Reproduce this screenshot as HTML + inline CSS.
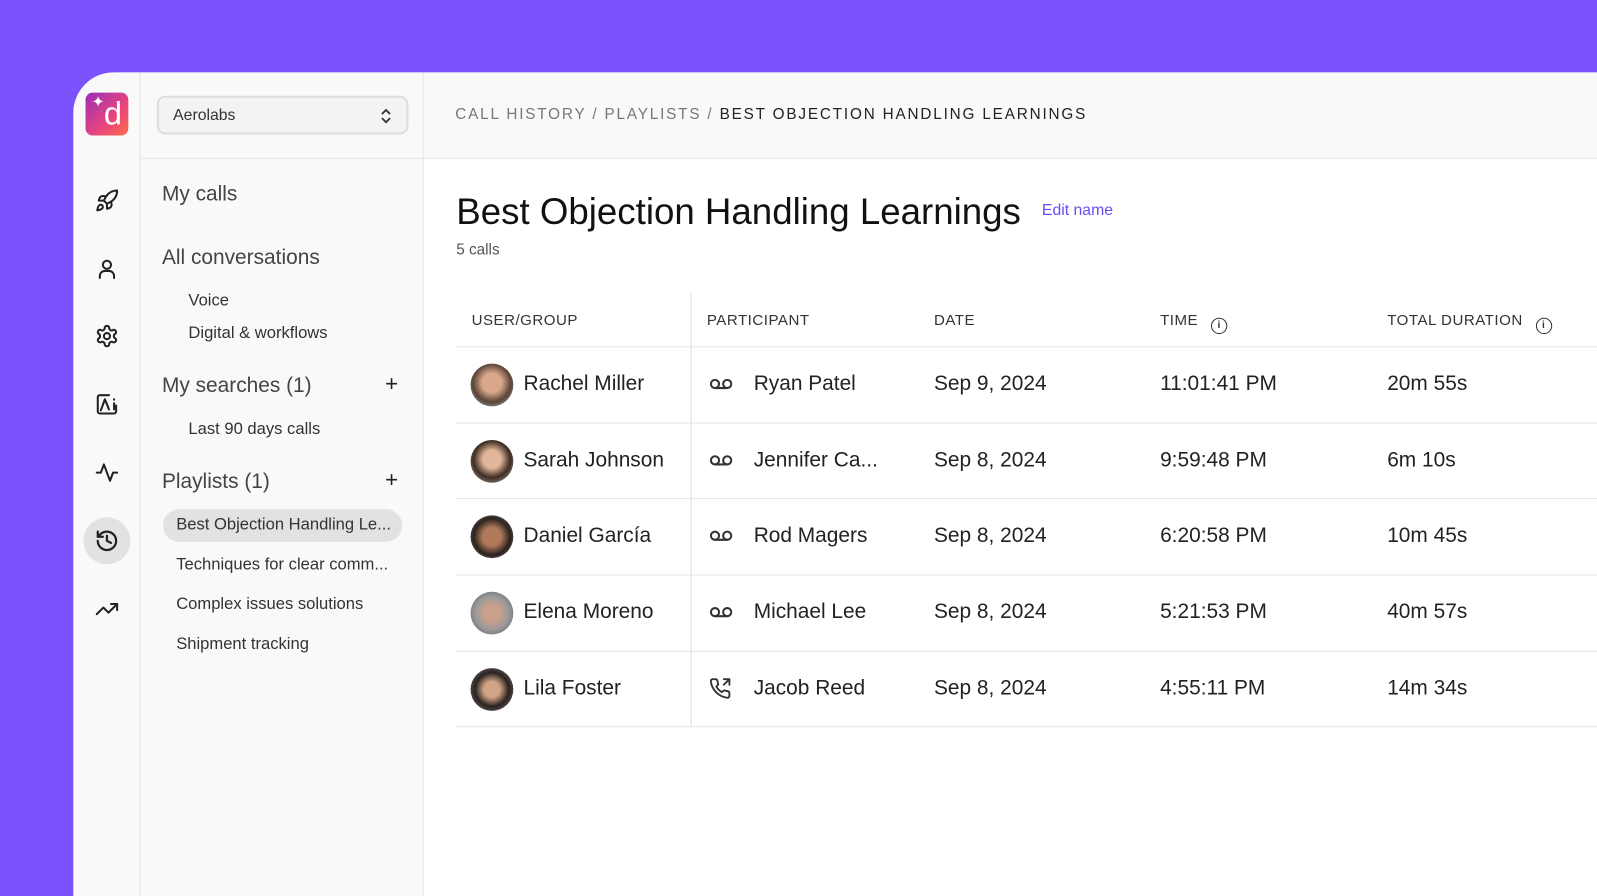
<!DOCTYPE html>
<html><head><meta charset="utf-8"><style>
*{box-sizing:border-box;margin:0;padding:0}
body{width:1597px;height:896px;background:#7b52fb;font-family:"Liberation Sans",sans-serif;color:#222;position:relative;overflow:hidden}
.wrap{position:absolute;left:0;top:0;width:1568px;height:880px;transform:scale(1.0185);transform-origin:0 0}
.app{position:absolute;left:72px;top:71px;right:0;bottom:0;background:#fff;border-top-left-radius:40px;overflow:hidden}
.rail{position:absolute;left:0;top:0;width:66px;bottom:0;background:#f9f9f9;border-right:1px solid #e4e4e4}
.side{position:absolute;left:66px;top:0;width:278px;bottom:0;background:#f9f9f9;border-right:1px solid #e4e4e4}
.head{position:absolute;left:344px;right:0;top:0;height:85px;background:#f9f9f9;border-bottom:1px solid #e4e4e4}
.abs{position:absolute;white-space:nowrap}
.ic{position:absolute;left:21px;width:24px;height:24px}
.sel{position:absolute;left:16px;top:23px;width:247px;height:38px;border:2px solid #ddd;border-radius:8px;background:#f3f3f3;font-size:15.5px;padding:9px 14px;color:#333}
.sidesep{position:absolute;left:0;right:0;top:84px;border-top:1px solid #e4e4e4}
.h1{font-size:20.5px;color:#444}
.s2{font-size:16.3px;color:#333}
.table{position:absolute;left:375px;top:217px;width:1200px}
.th{position:absolute;top:19px;font-size:14.8px;letter-spacing:.5px;color:#333}
.row{position:absolute;left:0;right:0;height:75px;border-top:1px solid #e6e6e6;font-size:20.5px;color:#222}
.row span{position:absolute;top:24px;white-space:nowrap}
.av{position:absolute;left:15px;top:16px;width:42px;height:42px;border-radius:50%}
</style></head><body>
<div class="wrap">
<div class="app">
 <div class="rail">
  <div style="position:absolute;left:12px;top:20px;width:42px;height:42px;border-radius:7px;background:linear-gradient(135deg,#9b2fb8,#e8457c 60%,#ff6a4a)"><span style="position:absolute;left:6px;top:0;color:#fff;font-size:15px">✦</span><span style="position:absolute;left:18px;top:4px;color:#fff;font-size:32px;line-height:32px">d</span></div>
  <svg class="ic" style="top:114px" viewBox="0 0 24 24" fill="none" stroke="#222" stroke-width="2" stroke-linecap="round" stroke-linejoin="round"><path d="M4.5 16.5c-1.5 1.3-2 5-2 5s3.7-.5 5-2c.7-.8.7-2.1-.1-2.9a2.2 2.2 0 0 0-2.9-.1z"/><path d="M12 15l-3-3a22 22 0 0 1 2-3.9A12.9 12.9 0 0 1 22 2c0 2.7-.8 7.5-6 11a22 22 0 0 1-4 2z"/><path d="M9 12H4s.6-3 2-4c1.6-1.1 5 0 5 0M12 15v5s3-.6 4-2c1.1-1.6 0-5 0-5"/></svg>
  <svg class="ic" style="top:181px" viewBox="0 0 24 24" fill="none" stroke="#222" stroke-width="2" stroke-linecap="round"><circle cx="12" cy="8" r="4"/><path d="M5 21v-2a5 5 0 0 1 5-5h4a5 5 0 0 1 5 5v2"/></svg>
  <svg class="ic" style="top:247px" viewBox="0 0 24 24" fill="none" stroke="#222" stroke-width="2" stroke-linejoin="round"><path d="M12.2 2h-.4a2 2 0 0 0-2 2v.2a2 2 0 0 1-1 1.7l-.4.3a2 2 0 0 1-2 0l-.2-.1a2 2 0 0 0-2.7.7l-.2.4a2 2 0 0 0 .7 2.7l.2.1a2 2 0 0 1 1 1.7v.5a2 2 0 0 1-1 1.8l-.2.1a2 2 0 0 0-.7 2.7l.2.4a2 2 0 0 0 2.7.7l.2-.1a2 2 0 0 1 2 0l.4.3a2 2 0 0 1 1 1.7v.2a2 2 0 0 0 2 2h.4a2 2 0 0 0 2-2v-.2a2 2 0 0 1 1-1.7l.4-.3a2 2 0 0 1 2 0l.2.1a2 2 0 0 0 2.7-.7l.2-.4a2 2 0 0 0-.7-2.7l-.2-.1a2 2 0 0 1-1-1.8v-.5a2 2 0 0 1 1-1.7l.2-.1a2 2 0 0 0 .7-2.7l-.2-.4a2 2 0 0 0-2.7-.7l-.2.1a2 2 0 0 1-2 0l-.4-.3a2 2 0 0 1-1-1.7V4a2 2 0 0 0-2-2z"/><circle cx="12" cy="12" r="3"/></svg>
  <svg class="ic" style="top:314px" viewBox="0 0 24 24" fill="none" stroke="#222" stroke-width="2" stroke-linecap="round" stroke-linejoin="round"><path d="M14 3H5a2 2 0 0 0-2 2v14a2 2 0 0 0 2 2h14a2 2 0 0 0 2-2v-6"/><path d="M6 18l4-11 4 10"/><path d="M19 11v6M19 7v.5"/></svg>
  <svg class="ic" style="top:381px" viewBox="0 0 24 24" fill="none" stroke="#222" stroke-width="2" stroke-linecap="round" stroke-linejoin="round"><path d="M2 12h4l3-8 6 16 3-8h4"/></svg>
  <div style="position:absolute;left:10px;top:437px;width:46px;height:46px;border-radius:50%;background:#e2e2e2"></div>
  <svg class="ic" style="top:448px" viewBox="0 0 24 24" fill="none" stroke="#222" stroke-width="2.2" stroke-linecap="round" stroke-linejoin="round"><path d="M3 12a9 9 0 1 0 9-9 9.7 9.7 0 0 0-6.7 2.7L3 8"/><path d="M3 3v5h5"/><path d="M12 7v5l4 2"/></svg>
  <svg class="ic" style="top:515px" viewBox="0 0 24 24" fill="none" stroke="#222" stroke-width="2" stroke-linecap="round" stroke-linejoin="round"><path d="M22 7l-8.5 8.5-5-5L2 17"/><path d="M16 7h6v6"/></svg>
 </div>
 <div class="side">
  <div class="sel">Aerolabs<svg style="position:absolute;right:14px;top:10px" width="12" height="16" viewBox="0 0 12 16" fill="none" stroke="#333" stroke-width="1.8"><path d="M2 6l4-4 4 4M2 10l4 4 4-4"/></svg></div>
  <div class="sidesep"></div>
  <div class="abs h1" style="left:21px;top:108px">My calls</div>
  <div class="abs h1" style="left:21px;top:170px">All conversations</div>
  <div class="abs s2" style="left:47px;top:215px">Voice</div>
  <div class="abs s2" style="left:47px;top:247px">Digital &amp; workflows</div>
  <div class="abs h1" style="left:21px;top:296px">My searches (1)</div>
  <div class="abs" style="left:240px;top:293px;font-size:22px">+</div>
  <div class="abs s2" style="left:47px;top:341px">Last 90 days calls</div>
  <div class="abs h1" style="left:21px;top:390px">Playlists (1)</div>
  <div class="abs" style="left:240px;top:387px;font-size:22px">+</div>
  <div class="abs" style="left:22px;top:429px;width:235px;height:32px;border-radius:16px;background:#e2e2e2"></div>
  <div class="abs s2" style="left:35px;top:435px">Best Objection Handling Le...</div>
  <div class="abs s2" style="left:35px;top:474px">Techniques for clear comm...</div>
  <div class="abs s2" style="left:35px;top:513px">Complex issues solutions</div>
  <div class="abs s2" style="left:35px;top:552px">Shipment tracking</div>
 </div>
 <div class="head"><div class="abs" style="left:31px;top:33px;font-size:15px;letter-spacing:1.8px;color:#777">CALL HISTORY / PLAYLISTS / <span style="color:#222">BEST OBJECTION HANDLING LEARNINGS</span></div></div>
 <div class="abs" style="left:376px;top:116px;font-size:36px;color:#111">Best Objection Handling Learnings</div>
 <div class="abs" style="left:951px;top:127px;font-size:15.5px;color:#6a4cf0">Edit name</div>
 <div class="abs" style="left:376px;top:166px;font-size:15px;color:#555">5 calls</div>
 <div class="table" style="height:426px">
  <div style="position:absolute;left:231px;top:0;height:426px;border-left:1px solid #ddd"></div>
  <div class="th" style="left:16px">USER/GROUP</div>
  <div class="th" style="left:247px">PARTICIPANT</div>
  <div class="th" style="left:470px">DATE</div>
  <div class="th" style="left:692px">TIME <span style="display:inline-block;width:16px;height:16px;border:1.8px solid #333;border-radius:50%;font-size:10px;text-align:center;line-height:13px;margin-left:8px;vertical-align:-3px;font-weight:bold">i</span></div>
  <div class="th" style="left:915px">TOTAL DURATION <span style="display:inline-block;width:16px;height:16px;border:1.8px solid #333;border-radius:50%;font-size:10px;text-align:center;line-height:13px;margin-left:8px;vertical-align:-3px;font-weight:bold">i</span></div>
  <div class="row" style="top:52px"><div class="av" style="background:radial-gradient(circle at 50% 45%,#d9a88a 30%,#5a4438 60%,#a9c3d8)"></div><span style="left:67px">Rachel Miller</span><svg style="position:absolute;left:250px;top:30px" width="22" height="12" viewBox="0 0 22 12" fill="none" stroke="#333" stroke-width="2"><circle cx="5" cy="6" r="4"/><circle cx="17" cy="6" r="4"/><path d="M5 10h12"/></svg><span style="left:293px">Ryan Patel</span><span style="left:470px">Sep 9, 2024</span><span style="left:692px">11:01:41 PM</span><span style="left:915px">20m 55s</span></div>
  <div class="row" style="top:127px"><div class="av" style="background:radial-gradient(circle at 50% 45%,#e2b69a 28%,#3f2c22 58%,#bbb)"></div><span style="left:67px">Sarah Johnson</span><svg style="position:absolute;left:250px;top:30px" width="22" height="12" viewBox="0 0 22 12" fill="none" stroke="#333" stroke-width="2"><circle cx="5" cy="6" r="4"/><circle cx="17" cy="6" r="4"/><path d="M5 10h12"/></svg><span style="left:293px">Jennifer Ca...</span><span style="left:470px">Sep 8, 2024</span><span style="left:692px">9:59:48 PM</span><span style="left:915px">6m 10s</span></div>
  <div class="row" style="top:201px"><div class="av" style="background:radial-gradient(circle at 50% 50%,#b07a5a 30%,#2d2320 60%,#777)"></div><span style="left:67px">Daniel García</span><svg style="position:absolute;left:250px;top:30px" width="22" height="12" viewBox="0 0 22 12" fill="none" stroke="#333" stroke-width="2"><circle cx="5" cy="6" r="4"/><circle cx="17" cy="6" r="4"/><path d="M5 10h12"/></svg><span style="left:293px">Rod Magers</span><span style="left:470px">Sep 8, 2024</span><span style="left:692px">6:20:58 PM</span><span style="left:915px">10m 45s</span></div>
  <div class="row" style="top:276px"><div class="av" style="background:radial-gradient(circle at 50% 50%,#c9a08a 28%,#9a9a9a 55%,#555)"></div><span style="left:67px">Elena Moreno</span><svg style="position:absolute;left:250px;top:30px" width="22" height="12" viewBox="0 0 22 12" fill="none" stroke="#333" stroke-width="2"><circle cx="5" cy="6" r="4"/><circle cx="17" cy="6" r="4"/><path d="M5 10h12"/></svg><span style="left:293px">Michael Lee</span><span style="left:470px">Sep 8, 2024</span><span style="left:692px">5:21:53 PM</span><span style="left:915px">40m 57s</span></div>
  <div class="row" style="top:351px;border-bottom:1px solid #e6e6e6"><div class="av" style="background:radial-gradient(circle at 50% 50%,#d2a486 26%,#2a2220 56%,#888)"></div><span style="left:67px">Lila Foster</span><svg style="position:absolute;left:249px;top:25px" width="22" height="22" viewBox="0 0 24 24" fill="none" stroke="#333" stroke-width="2" stroke-linecap="round" stroke-linejoin="round"><path d="M16 8l6-6M16 2h6v6"/><path d="M22 16.9v3a2 2 0 0 1-2.2 2 19.8 19.8 0 0 1-8.6-3.1 19.5 19.5 0 0 1-6-6A19.8 19.8 0 0 1 2.1 4.2 2 2 0 0 1 4.1 2h3a2 2 0 0 1 2 1.7c.1 1 .4 1.9.7 2.8a2 2 0 0 1-.5 2.1L8 9.9a16 16 0 0 0 6 6l1.3-1.3a2 2 0 0 1 2.1-.4c.9.3 1.8.6 2.8.7a2 2 0 0 1 1.7 2z"/></svg><span style="left:293px">Jacob Reed</span><span style="left:470px">Sep 8, 2024</span><span style="left:692px">4:55:11 PM</span><span style="left:915px">14m 34s</span></div>
 </div>
</div>
</div>
</body></html>
